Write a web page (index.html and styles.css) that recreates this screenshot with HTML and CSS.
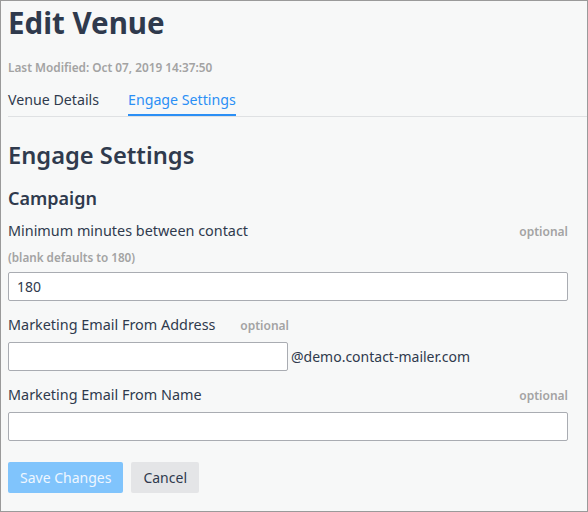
FILE: index.html
```html
<!DOCTYPE html>
<html>
<head>
<meta charset="utf-8">
<link rel="stylesheet" href="styles.css">
</head>
<body>
<div class="page">
  <header class="head">
    <h1 class="title">Edit Venue</h1>
    <div class="modified">Last Modified: Oct 07, 2019 14:37:50</div>
    <nav class="tabs">
      <a class="tab">Venue Details</a>
      <a class="tab active">Engage Settings</a>
    </nav>
  </header>
  <main class="form">
    <h2 class="section">Engage Settings</h2>
    <h3 class="group">Campaign</h3>

    <div class="field">
      <div class="label-row">
        <label class="label">Minimum minutes between contact</label>
        <span class="optional">optional</span>
      </div>
      <div class="hint">(blank defaults to 180)</div>
      <input class="input first" type="text" value="180">
    </div>

    <div class="field">
      <div class="label-row short">
        <label class="label">Marketing Email From Address</label>
        <span class="optional">optional</span>
      </div>
      <div class="email-row">
        <input class="input email" type="text">
        <span class="suffix">@demo.contact-mailer.com</span>
      </div>
    </div>

    <div class="field">
      <div class="label-row">
        <label class="label">Marketing Email From Name</label>
        <span class="optional">optional</span>
      </div>
      <input class="input" type="text">
    </div>

    <div class="actions">
      <button class="btn primary">Save Changes</button>
      <button class="btn secondary">Cancel</button>
    </div>
  </main>
</div>
</body>
</html>
```
FILE: styles.css
```css
* { box-sizing: border-box; }
html, body { margin: 0; padding: 0; }
body {
  font-family: "Noto Sans", "Open Sans", "Liberation Sans", sans-serif;
  color: #2f3a4d;
  background: #f7f8f8;
}
.page {
  width: 588px;
  height: 512px;
  border: 1px solid #9a9a9a;
  background: #f7f8f8;
  overflow: hidden;
}
.head {
  padding-left: 7px;
}
.title {
  margin: 0;
  padding-top: 2px;
  font-size: 29.5px;
  line-height: 40px;
  font-weight: 700;
}
.modified {
  margin-top: 16px;
  font-size: 11.8px;
  line-height: 16px;
  font-weight: 600;
  color: #a3a3a3;
}
.tabs {
  display: flex;
  gap: 29px;
  margin-top: 15px;
  border-bottom: 1px solid #dfe1e3;
}
.tab {
  font-size: 14.2px;
  line-height: 20px;
  padding-bottom: 4px;
  border-bottom: 2px solid transparent;
  color: #2f3a4d;
}
.tab.active {
  color: #2b8ff5;
  border-bottom-color: #2b8ff5;
}
.form {
  padding: 0 19px 0 7px;
}
.section {
  margin: 22px 0 0;
  font-size: 23.7px;
  line-height: 32px;
  font-weight: 600;
}
.group {
  margin: 15px 0 0;
  font-size: 18px;
  line-height: 24px;
  font-weight: 600;
}
.field { margin-top: 9px; }
.field + .field { margin-top: 12px; }
.label-row {
  display: flex;
  justify-content: space-between;
  align-items: baseline;
}
.label-row.short { width: 281px; }
.label {
  font-size: 14.4px;
  line-height: 24px;
}
.optional {
  font-size: 12px;
  font-weight: 600;
  color: #a3a3a3;
}
.hint {
  margin-top: 6px;
  font-size: 11.7px;
  line-height: 16px;
  font-weight: 600;
  color: #a3a3a3;
}
.input {
  display: block;
  width: 100%;
  height: 29px;
  margin-top: 5px;
  padding: 0 8px;
  border: 1px solid #a9acb2;
  border-radius: 2px;
  background: #fff;
  font-family: inherit;
  font-size: 14px;
  color: #2f3a4d;
}
.input.first { margin-top: 7px; }
.email-row {
  display: flex;
  align-items: center;
  gap: 3px;
  margin-top: 5px;
}
.email-row .input { margin-top: 0; width: 280px; }
.suffix { font-size: 14px; }
.actions {
  display: flex;
  gap: 8px;
  margin-top: 21px;
}
.btn {
  height: 31px;
  border: none;
  border-radius: 2px;
  font-family: inherit;
  font-size: 14px;
  padding: 0 12px;
}
.btn.primary {
  background: #80c4fc;
  color: #eef6ff;
}
.btn.secondary {
  background: #e4e5e7;
  color: #2f3a4d;
}
```
